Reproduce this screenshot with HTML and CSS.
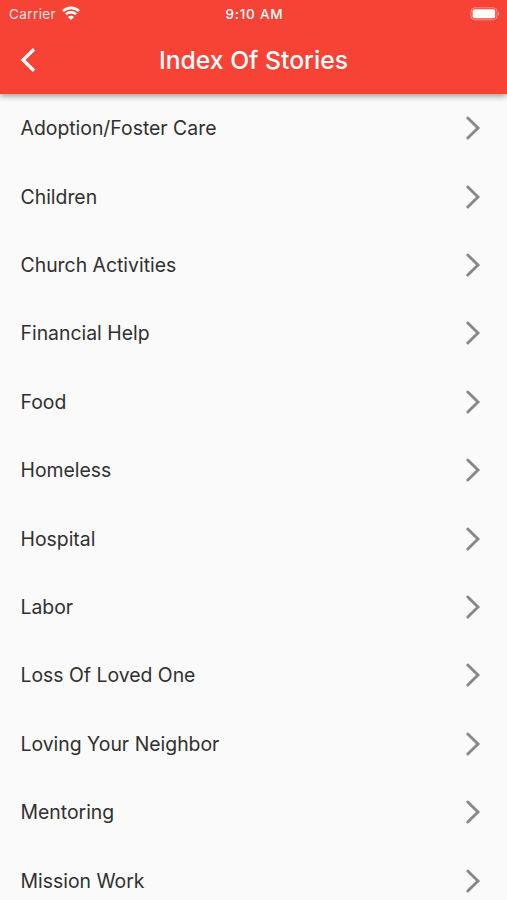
FILE: index.html
```html
<!DOCTYPE html>
<html lang="en">
<head>
    <meta charset="UTF-8">
    <meta name="viewport" content="width=device-width, initial-scale=1.0">
    <title>Index Of Stories</title>
    <link rel="stylesheet" href="styles.css">
</head>
<body>
    <header>
        <div class="status-bar">
            <div class="carrier">
                <span>Carrier</span>
                <svg class="wifi" viewBox="0 0 18 14" width="18" height="14">
                    <path d="M1 5.1a11.6 11.6 0 0 1 16 0M3.9 8.3a7.4 7.4 0 0 1 10.2 0" fill="none" stroke="#fff" stroke-width="2.6"/>
                    <path d="M6 10.9a4.2 4.2 0 0 1 6 0L9 14z" fill="#fff"/>
                </svg>
            </div>
            <span class="time">9:10 AM</span>
            <svg class="battery" viewBox="0 0 30 14" width="30" height="14">
                <rect x="1" y=".8" width="26" height="12" rx="3.6" fill="none" stroke="#fff" stroke-opacity=".4"/>
                <rect x="2.6" y="2.3" width="22.6" height="9" rx="1.8" fill="#fff"/>
                <path d="M28 4.8q2.6 2 0 4z" fill="#fff" fill-opacity=".5"/>
            </svg>
        </div>
        <div class="title-bar">
            <button class="back" aria-label="Back">
                <svg viewBox="0 0 16 26" width="16" height="26">
                    <path d="M14 2.2 3 13l11 10.8" fill="none" stroke="#fff" stroke-width="3.3"/>
                </svg>
            </button>
            <h1>Index Of Stories</h1>
        </div>
    </header>
    <ul class="stories" id="stories"></ul>

    <script>
        const stories = [
            'Adoption/Foster Care', 'Children', 'Church Activities', 'Financial Help',
            'Food', 'Homeless', 'Hospital', 'Labor', 'Loss Of Loved One',
            'Loving Your Neighbor', 'Mentoring', 'Mission Work'
        ];
        const arrow = '<svg class="arrow" viewBox="0 0 16 26" width="16" height="26"><path d="M2.8 3l10.2 10L2.8 23"/></svg>';
        document.getElementById('stories').innerHTML = stories
            .map(name => `<li><span>${name}</span>${arrow}</li>`)
            .join('');
    </script>
</body>
</html>
```
FILE: styles.css
```css
body {
    margin: 0;
    height: 900px;
    overflow: hidden;
    background: #fafafa;
    color: #303030;
    font-family: Inter, "Liberation Sans", sans-serif;
}
header {
    position: relative;
    height: 94px;
    background: #f64336;
    color: #fff;
    box-shadow: 0 2px 6px rgba(0, 0, 0, 0.4);
}
.status-bar {
    display: grid;
    grid-template-columns: 1fr auto 1fr;
    align-items: center;
    height: 27px;
    padding: 0 7px 0 9px;
    font-size: 13.5px;
}
.carrier {
    display: flex;
    align-items: center;
    gap: 6px;
    letter-spacing: 0.4px;
}
.carrier span {
    opacity: 0.85;
}
.wifi {
    margin-top: -2px;
}
.time {
    font-weight: 500;
    letter-spacing: 0.8px;
}
.battery {
    justify-self: end;
}
.title-bar {
    display: grid;
    grid-template-columns: 60px 1fr 60px;
    align-items: center;
    height: 66px;
}
.back {
    display: flex;
    padding: 0 0 0 19.5px;
    border: none;
    background: none;
}
h1 {
    margin: 0;
    font-size: 24.7px;
    font-weight: 500;
    text-align: center;
}
.stories {
    margin: 0;
    padding: 0;
    list-style: none;
}
.stories li {
    display: flex;
    align-items: center;
    justify-content: space-between;
    height: 68.42px;
    padding: 0 26px 0 20.5px;
    font-size: 19.4px;
}
.arrow path {
    fill: none;
    stroke: #888;
    stroke-width: 2.9;
    stroke-linecap: round;
}
```
